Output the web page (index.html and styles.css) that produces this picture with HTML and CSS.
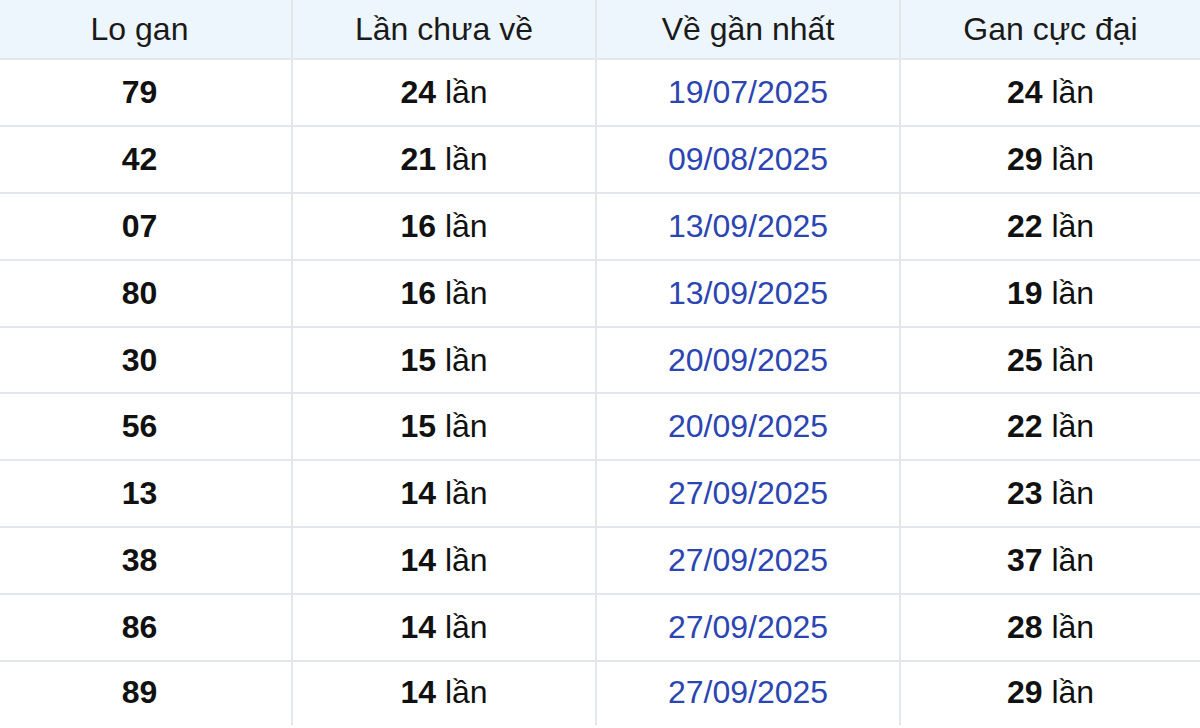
FILE: index.html
```html
<!DOCTYPE html>
<html lang="vi">
<head>
<meta charset="utf-8">
<title>Lo gan</title>
<link rel="stylesheet" href="styles.css">
</head>
<body>
<table class="gan-table">
  <colgroup>
    <col class="c1"><col class="c2"><col class="c3"><col class="c4">
  </colgroup>
  <thead>
    <tr><th>Lo gan</th><th>Lần chưa về</th><th>Về gần nhất</th><th>Gan cực đại</th></tr>
  </thead>
  <tbody>
    <tr><td><b>79</b></td><td><b>24</b> lần</td><td class="date">19/07/2025</td><td><b>24</b> lần</td></tr>
    <tr><td><b>42</b></td><td><b>21</b> lần</td><td class="date">09/08/2025</td><td><b>29</b> lần</td></tr>
    <tr><td><b>07</b></td><td><b>16</b> lần</td><td class="date">13/09/2025</td><td><b>22</b> lần</td></tr>
    <tr><td><b>80</b></td><td><b>16</b> lần</td><td class="date">13/09/2025</td><td><b>19</b> lần</td></tr>
    <tr><td><b>30</b></td><td><b>15</b> lần</td><td class="date">20/09/2025</td><td><b>25</b> lần</td></tr>
    <tr><td><b>56</b></td><td><b>15</b> lần</td><td class="date">20/09/2025</td><td><b>22</b> lần</td></tr>
    <tr><td><b>13</b></td><td><b>14</b> lần</td><td class="date">27/09/2025</td><td><b>23</b> lần</td></tr>
    <tr><td><b>38</b></td><td><b>14</b> lần</td><td class="date">27/09/2025</td><td><b>37</b> lần</td></tr>
    <tr><td><b>86</b></td><td><b>14</b> lần</td><td class="date">27/09/2025</td><td><b>28</b> lần</td></tr>
    <tr><td><b>89</b></td><td><b>14</b> lần</td><td class="date">27/09/2025</td><td><b>29</b> lần</td></tr>
  </tbody>
</table>
</body>
</html>
```
FILE: styles.css
```css
html, body {
  margin: 0;
  padding: 0;
  background: #ffffff;
  overflow: hidden;
}
body {
  font-family: "Liberation Sans", Arial, sans-serif;
  color: #111111;
}
.gan-table {
  border-collapse: collapse;
  table-layout: fixed;
  width: 1212px;
  margin-left: -12px;
  font-size: 32px;
}
.gan-table .c1,
.gan-table .c2,
.gan-table .c3 {
  width: 304px;
}
.gan-table .c4 {
  width: 300px;
}
.gan-table th,
.gan-table td {
  text-align: center;
  vertical-align: middle;
  padding: 0;
  border-left: 2px solid #e3e6ea;
  border-bottom: 2px solid #e3e6ea;
}
.gan-table th:first-child,
.gan-table td:first-child {
  border-left: none;
}
.gan-table th {
  height: 58px;
  background: #eef6fd;
  font-weight: normal;
  color: #1a1a1a;
}
.gan-table td {
  height: 64.9px;
}
.gan-table tbody tr:last-child td {
  border-bottom: none;
  height: 61px;
  padding-bottom: 2px;
}
.gan-table b {
  font-weight: bold;
  color: #111111;
}
.gan-table .date {
  color: #2b45b2;
}
```
